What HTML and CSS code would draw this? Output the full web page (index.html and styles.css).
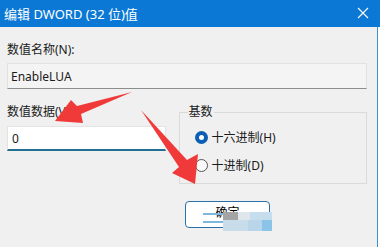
FILE: index.html
```html
<!DOCTYPE html>
<html lang="zh-CN">

<head>
  <meta charset="UTF-8">
  <meta name="viewport" content="width=device-width, initial-scale=1.0">
  <title>编辑 DWORD (32 位)值</title>
  <link rel="stylesheet" href="styles.css">
</head>

<body>
  <div class="window">
    <div class="titlebar">
      <span class="title">编辑 DWORD (32 位)值</span>
      <svg class="close" width="12" height="12" viewBox="0 0 12 12">
        <path d="M1 1 L11 11 M11 1 L1 11" stroke="#fff" stroke-width="1.1" fill="none" />
      </svg>
    </div>

    <div class="content">
      <div class="label first">数值名称(N):</div>
      <div class="field readonly">EnableLUA</div>

      <div class="row">
        <div class="data">
          <div class="label">数值数据(V):</div>
          <div class="field edit">0</div>
        </div>
        <fieldset class="base">
          <legend>基数</legend>
          <div class="option"><span class="radio on"></span>十六进制(H)</div>
          <div class="option"><span class="radio"></span>十进制(D)</div>
        </fieldset>
      </div>

      <div class="buttons">
        <button type="button" class="btn default">确定</button>
      </div>
    </div>

    <!-- annotation layer: red arrows + mosaic -->
    <svg class="marks" width="380" height="247" viewBox="0 0 380 247">
      <polygon fill="#f03a3a" points="132,92 77,106 71,100 55,121 83,123 81,114" />
      <polygon fill="#f03a3a" points="141,110 187,160 198,154 195,184 172,173 179,167" />
      <rect x="203" y="213" width="24" height="2" fill="#7fb6de" />
      <rect x="203" y="221" width="22" height="2" fill="#7fb6de" />
      <rect x="223" y="212" width="15" height="8" fill="#a4a4a4" />
      <rect x="238" y="212" width="12" height="8" fill="#dfe6ec" />
      <rect x="250" y="212" width="22" height="8" fill="#c6ddee" />
      <rect x="223" y="220" width="25" height="11" fill="#c8dcea" />
      <rect x="248" y="220" width="14" height="11" fill="#b8d5ea" />
      <rect x="262" y="220" width="10" height="11" fill="#8cc3e8" />
    </svg>
  </div>
</body>

</html>
```

FILE: styles.css
```css
body {
  margin: 0;
  background-color: white;
  font-family: "Noto Sans", "Noto Sans CJK SC", sans-serif;
  font-size: 12px;
  color: #1a1a1a;
}

.window {
  position: relative;
  width: 380px;
  height: 247px;
  overflow: hidden;
}

.titlebar {
  height: 27px;
  background-color: #0a78d4;
  color: white;
  display: flex;
  align-items: center;
  justify-content: space-between;
  padding: 0 11px 0 4px;
}

.title {
  font-size: 13px;
  line-height: 16px;
}

.close {
  margin-top: -1px;
}

.content {
  width: 378px;
  height: 220px;
  box-sizing: border-box;
  background-color: #f0f0f0;
  border-right: 1px solid #3d8fd0;
  padding: 15px 10px 0 7px;
}

.label {
  line-height: 16px;
  margin-bottom: 6px;
}

.label.first {
  margin-bottom: 5px;
}

.field {
  box-sizing: border-box;
  padding-left: 3px;
  display: flex;
  align-items: center;
}

.readonly {
  height: 26px;
  background-color: #f4f4f4;
  border: 1px solid #e2e2e2;
  border-bottom-color: #8d8d8d;
}

.row {
  display: flex;
  gap: 13px;
  margin-top: 15px;
}

.data {
  width: 159px;
}

.edit {
  height: 25px;
  background-color: white;
  border: 1px solid #e3e3e3;
  border-bottom: 2px solid #22708f;
  padding-left: 4px;
}

.base {
  width: 189px;
  height: 80px;
  box-sizing: border-box;
  margin: 0;
  border: 1px solid #dadada;
  padding: 0 0 0 8px;
}

.base legend {
  padding: 0 1px;
  line-height: 16px;
}

.option {
  display: flex;
  align-items: center;
  gap: 4px;
  height: 20px;
  margin-left: 7px;
  margin-top: 8px;
}

.option:first-of-type {
  margin-top: 7px;
}

.radio {
  width: 13px;
  height: 13px;
  box-sizing: border-box;
  border-radius: 50%;
  border: 1px solid #555;
  background-color: #f9f9f9;
}

.radio.on {
  border: 4px solid #0a5fb4;
  background-color: white;
}

.buttons {
  display: flex;
  margin-top: 17px;
  padding-left: 178px;
}

.btn {
  width: 85px;
  height: 27px;
  font-family: inherit;
  font-size: 12px;
  background-color: white;
  border: 1px solid #2b6fa8;
  border-radius: 4px;
  padding: 0 0 6px;
}

.marks {
  position: absolute;
  top: 0;
  left: 0;
  pointer-events: none;
}
```
